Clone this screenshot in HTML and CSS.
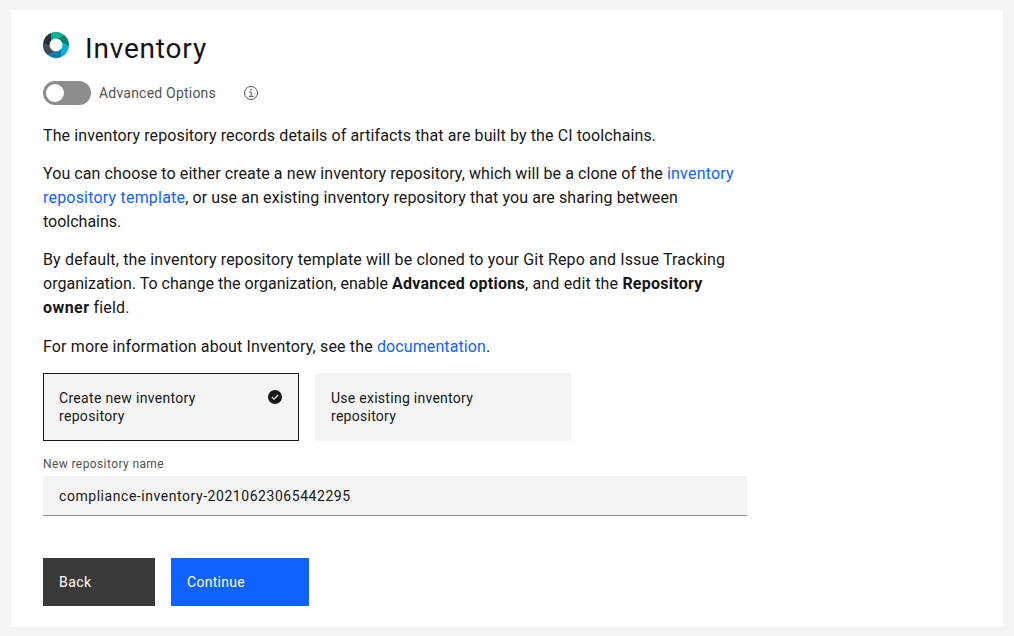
FILE: index.html
```
<!DOCTYPE html>
<html lang="en">
<head>
<meta charset="utf-8">
<title>Inventory</title>
<link rel="stylesheet" href="styles.css">
</head>
<body>
<main class="card">
  <header class="heading">
    <svg class="logo" viewBox="-13 -13 26 26" aria-hidden="true">
      <defs><path id="blade" d="M-5-4V-12A13 13 0 0 1 7.89-10.33L.96-6.33A6.4 6.4 0 0 0-5-4Z"/></defs>
      <use href="#blade" fill="#00b398"/>
      <use href="#blade" fill="#008571" transform="rotate(60)"/>
      <use href="#blade" fill="#00b0d8" transform="rotate(120)"/>
      <use href="#blade" fill="#087fa8" transform="rotate(180)"/>
      <use href="#blade" fill="#3d4d55" transform="rotate(240)"/>
      <use href="#blade" fill="#22303a" transform="rotate(300)"/>
    </svg>
    <h1 class="title">Inventory</h1>
  </header>

  <div class="options">
    <span class="toggle" role="switch" aria-checked="false"><span class="knob"></span></span>
    <span class="options-label">Advanced Options</span>
    <svg class="info" viewBox="0 0 16 16" fill="none" stroke="#525252" aria-hidden="true">
      <circle cx="8" cy="8" r="6.5"/>
      <path d="M6.3 7H8.2V11.1M6 11.4H10.3"/>
      <circle cx="8" cy="4.8" r=".8" fill="#525252" stroke="none"/>
    </svg>
  </div>

  <section class="copy">
    <p><span class="t10">The inventory repository records details of artifacts that are built by the CI toolchains.</span></p>
    <p><span class="t9">You can choose to either create a new inventory repository, which will be a clone of the </span><a class="link">inventory<br>repository template</a><span class="t10">, or use an existing inventory repository that you are sharing between<br></span>toolchains.</p>
    <p><span class="t15">By default, the inventory repository template will be cloned to your Git Repo and Issue Tracking<br></span><span class="t2">organization. To change the organization, enable </span><b class="t24">Advanced options</b><span class="t18">, and edit the </span><b class="t24">Repository<br></b><b class="t45">owner</b><span class="t15"> field.</span></p>
    <p class="more"><span class="t15">For more information about Inventory, see the </span><a class="link t10">documentation</a>.</p>
  </section>

  <div class="tiles">
    <div class="tile selected">
      <span>Create new inventory<br>repository</span>
      <svg class="check" viewBox="0 0 16 16" aria-hidden="true">
        <circle cx="8" cy="8" r="7" fill="#161616"/>
        <path d="M4.9 8L7 10.1L11.1 6" fill="none" stroke="#f4f4f4" stroke-width="1.25"/>
      </svg>
    </div>
    <div class="tile existing"><span>Use existing inventory<br>repository</span></div>
  </div>

  <label class="field-label" for="repo">New repository name</label>
  <input class="field" id="repo" type="text" value="compliance-inventory-20210623065442295">

  <div class="actions">
    <button class="btn back">Back</button>
    <button class="btn continue">Continue</button>
  </div>
</main>
</body>
</html>
```
FILE: styles.css
```
* { box-sizing: border-box; }

body {
  margin: 0;
  padding: 10px 11px 9px;
  background: #f4f4f4;
  color: #161616;
  font-family: Roboto, sans-serif;
  font-size: 16px;
  line-height: 24px;
}

.card {
  height: 617px;
  padding: 20px 32px 0;
  background: #fff;
}

.heading { display: flex; gap: 16px; height: 38px; }
.logo { width: 26px; height: 26px; margin-top: 2px; }
.title {
  margin: 1px 0 0;
  font-size: 28px;
  font-weight: 400;
  line-height: 36px;
  letter-spacing: .82px;
}

.options { display: flex; align-items: center; height: 24px; margin-top: 13px; }
.toggle {
  width: 48px;
  height: 24px;
  padding: 3px;
  border-radius: 12px;
  background: #8d8d8d;
}
.knob { display: block; width: 18px; height: 18px; border-radius: 50%; background: #fff; }
.options-label {
  width: 144px;
  margin-left: 8px;
  color: #525252;
  font-size: 14px;
  letter-spacing: .21px;
}
.info { width: 16px; height: 16px; }

.copy { margin-top: 19px; white-space: nowrap; }
.copy p { margin: 0 0 14px; }
.copy .more { margin-top: 15px; }
.link { color: #0f62fe; letter-spacing: .2px; }
.t2 { letter-spacing: .02px; }
.t9 { letter-spacing: .088px; }
.t10 { letter-spacing: .102px; }
.t15 { letter-spacing: .15px; }
.t18 { letter-spacing: .18px; }
.t24 { letter-spacing: .24px; }
.t45 { letter-spacing: .45px; }

.tiles { display: flex; gap: 16px; }
.tile {
  display: flex;
  justify-content: space-between;
  width: 256px;
  height: 68px;
  padding: 15px;
  border: 1px solid #f4f4f4;
  background: #f4f4f4;
  font-size: 14px;
  line-height: 18px;
  letter-spacing: .32px;
}
.selected { border-color: #161616; }
.existing { letter-spacing: .27px; }
.check { width: 16px; height: 16px; }

.field-label {
  display: block;
  margin-top: 15px;
  color: #525252;
  font-size: 12px;
  line-height: 16px;
  letter-spacing: .4px;
}
.field {
  display: block;
  width: 704px;
  height: 40px;
  margin-top: 4px;
  padding: 0 16px;
  border: 0;
  border-bottom: 1px solid #8d8d8d;
  border-radius: 0;
  background: #f4f4f4;
  color: #161616;
  font: 14px Roboto, sans-serif;
  letter-spacing: .55px;
}

.actions { display: flex; gap: 16px; margin-top: 42px; }
.btn {
  height: 48px;
  padding: 0 16px;
  border: 0;
  color: #fff;
  font: 14px Roboto, sans-serif;
  text-align: left;
}
.back { width: 112px; background: #393939; letter-spacing: .43px; }
.continue { width: 138px; background: #0f62fe; letter-spacing: .29px; }
```
